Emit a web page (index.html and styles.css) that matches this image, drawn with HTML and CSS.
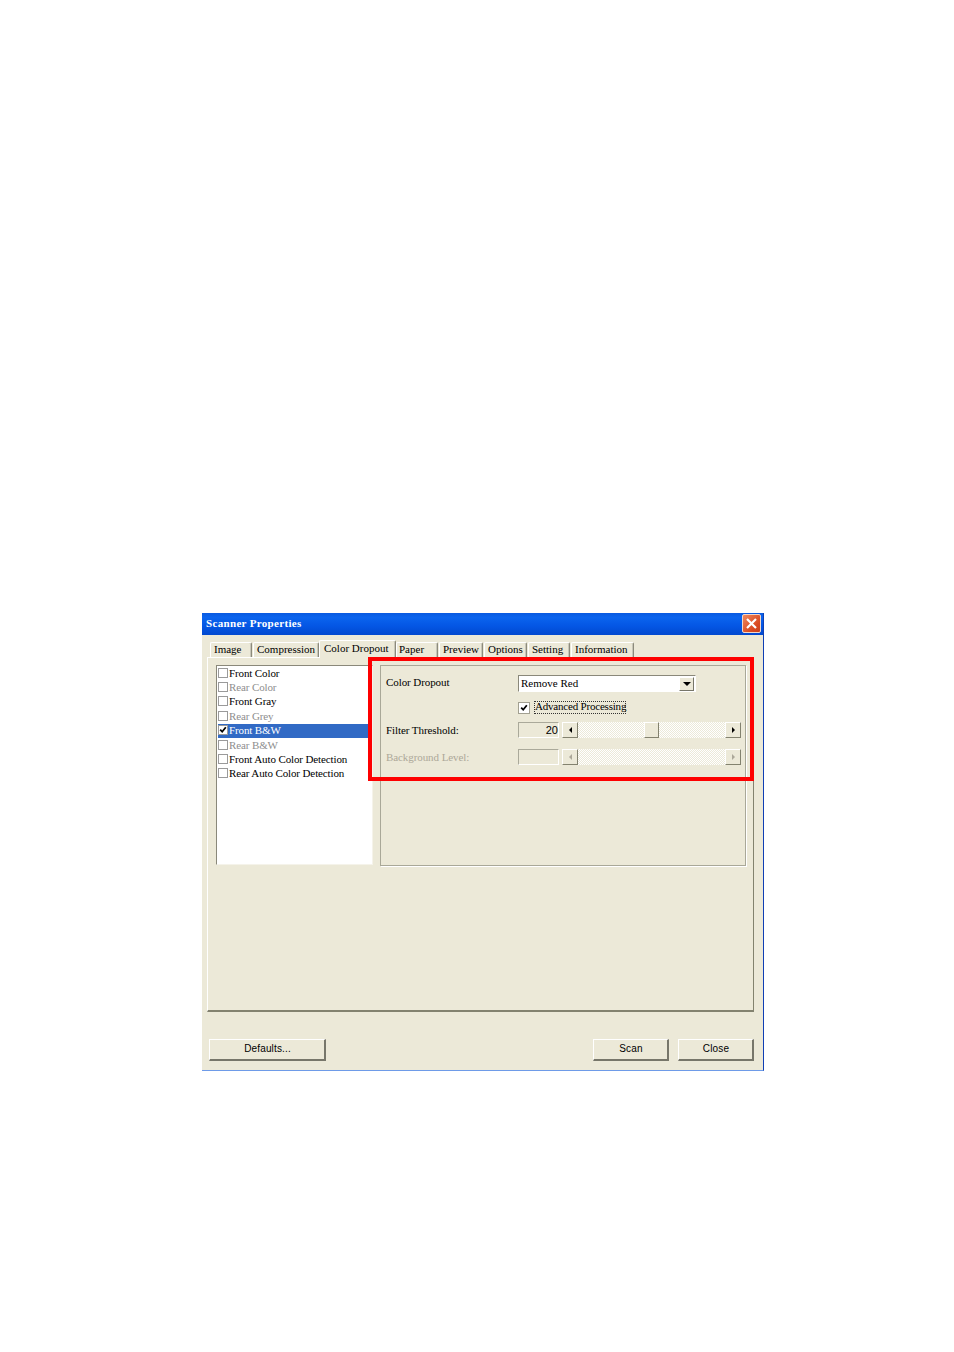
FILE: index.html
```html
<!DOCTYPE html>
<html lang="en">
<head>
<meta charset="utf-8">
<title>Scanner Properties</title>
<link rel="stylesheet" href="styles.css">
</head>
<body>
<div class="dialog">
  <header class="titlebar">
    <span class="title">Scanner Properties</span>
    <span class="close"><svg viewBox="0 0 19 19" width="19" height="19"><path d="M5 5 14 14M14 5 5 14" stroke="#fff" stroke-width="2.2" fill="none"/></svg></span>
  </header>
  <nav class="tabs">
    <span class="tab">Image</span>
    <span class="tab">Compression</span>
    <span class="tab active">Color Dropout</span>
    <span class="tab">Paper</span>
    <span class="tab">Preview</span>
    <span class="tab">Options</span>
    <span class="tab">Setting</span>
    <span class="tab">Information</span>
  </nav>
  <main class="panel">
    <ul class="list">
      <li class="item"><i class="box"></i>Front Color</li>
      <li class="item off"><i class="box"></i>Rear Color</li>
      <li class="item"><i class="box"></i>Front Gray</li>
      <li class="item off"><i class="box"></i>Rear Grey</li>
      <li class="item selected"><i class="box"><svg viewBox="0 0 10 10" width="8" height="8"><path d="M1.5 4.5 4 7.2 8.5 1.5" stroke="#000" stroke-width="2.2" fill="none"/></svg></i>Front B&amp;W</li>
      <li class="item off"><i class="box"></i>Rear B&amp;W</li>
      <li class="item"><i class="box"></i>Front Auto Color Detection</li>
      <li class="item"><i class="box"></i>Rear Auto Color Detection</li>
    </ul>
    <section class="group">
      <div class="row row-combo">
        <label class="label">Color Dropout</label>
        <div class="combo"><span class="combo-text">Remove Red</span><span class="combo-btn"><b class="tri down"></b></span></div>
      </div>
      <div class="row row-check">
        <span></span>
        <div class="check"><i class="box small"><svg viewBox="0 0 10 10" width="8" height="8"><path d="M1.5 4.5 4 7.2 8.5 1.5" stroke="#000" stroke-width="2.2" fill="none"/></svg></i><span class="focus">Advanced Processing</span></div>
      </div>
      <div class="row row-slider">
        <label class="label">Filter Threshold:</label>
        <div class="slider">
          <span class="value">20</span>
          <div class="scroll">
            <span class="sbtn"><b class="tri left"></b></span>
            <span class="track"><span class="thumb"></span></span>
            <span class="sbtn"><b class="tri right"></b></span>
          </div>
        </div>
      </div>
      <div class="row row-slider disabled">
        <label class="label">Background Level:</label>
        <div class="slider">
          <span class="value"></span>
          <div class="scroll">
            <span class="sbtn"><b class="tri left"></b></span>
            <span class="track"></span>
            <span class="sbtn"><b class="tri right"></b></span>
          </div>
        </div>
      </div>
    </section>
  </main>
  <footer class="footer">
    <button class="btn wide">Defaults...</button>
    <span class="spacer"></span>
    <button class="btn">Scan</button>
    <button class="btn">Close</button>
  </footer>
  <div class="redbox"></div>
</div>
</body>
</html>
```
FILE: styles.css
```css
* { box-sizing: border-box; }
html, body { margin: 0; background: #fff; }
body { padding: 613px 0 0 202px; height: 1352px; overflow: hidden; font-family: "Liberation Serif", serif; font-size: 11px; color: #000; }
.dialog { position: relative; width: 562px; height: 458px; background: #ece9d8; border-right: 1px solid #0f3fb4; border-bottom: 1px solid #6e9be8; display: flex; flex-direction: column; }
.titlebar { height: 22px; flex: none; display: flex; align-items: flex-start; justify-content: space-between; padding: 1px 2px 0 4px; background: linear-gradient(#0a5ae0 0%, #0b64ee 20%, #0456e4 60%, #0249cf 100%); }
.title { color: #fff; font-weight: bold; font-size: 11px; line-height: 18px; letter-spacing: .33px; }
.close { width: 19px; height: 19px; display: block; border: 1px solid #f4d8c8; border-radius: 2px; background: linear-gradient(135deg, #ee8a60, #d9481f 70%, #c8401c); }
.close svg { display: block; margin: -1px; }
.tabs { display: grid; grid-template-columns: 42px 66px 75px 42px 44px 43px 42px 63px; column-gap: 1px; height: 22px; margin: 0 0 0 8px; width: max-content; align-items: end; position: relative; z-index: 1; }
.tab { height: 15px; padding-left: 3px; line-height: 12px; font-size: 11px; white-space: nowrap; border: 1px solid #fff; border-bottom: 0; border-right: 1px solid #8c8a7c; box-shadow: inset -1px 0 #c8c6b8; border-radius: 2px 2px 0 0; }
.tab.active { height: 18px; margin: 0 -1px -1px; padding: 0 0 0 4px; line-height: 14px; background: #ece9d8; position: relative; }
.tab.active + .tab { padding-left: 2px; }
.panel { height: 355px; margin-left: 5px; width: 547px; flex: none; border: 1px solid #fff; border-bottom: 2px solid #83826f; border-right: 1px solid #83826f; padding: 7px 7px 0 8px; display: flex; gap: 7px; align-items: flex-start; }
.list { list-style: none; margin: 0; padding: 0 0 0 1px; width: 158px; height: 200px; background: #fff; border: 1px solid; border-color: #8a887a #f5f3ea #f5f3ea #8a887a; }
.item { display: flex; align-items: center; height: 14.4px; padding-bottom: 1px; line-height: 12px; font-size: 11px; white-space: nowrap; letter-spacing: -.12px; }
.item.off { color: #8e8e8e; }
.item.selected { background: #316ac5; color: #fff; }
.box { flex: none; display: flex; align-items: center; justify-content: center; width: 10px; height: 10px; margin-right: 1px; background: #fff; border: 1px solid #9a9a9a; }
.group { flex: none; width: 366px; height: 201px; padding: 9px 5px 0 5px; border: 1px solid #a9a898; box-shadow: 1px 1px 0 #fff; }
.row { display: grid; grid-template-columns: 132px 1fr; align-items: center; }
.label { font-size: 11px; letter-spacing: -.08px; }
.row-combo { height: 17px; }
.row-combo .label { padding-bottom: 3px; }
.disabled .label { padding-bottom: 1px; }
.row-check { height: 13px; margin-top: 9px; }
.row-slider { height: 16px; margin-top: 8px; }
.row-slider + .row-slider { margin-top: 11px; }
.combo { width: 178px; height: 17px; display: flex; align-items: center; justify-content: space-between; background: #fff; border: 1px solid; border-color: #8a887a #fff #fff #8a887a; padding: 0 1px 0 2px; }
.combo-text { font-size: 11px; padding-bottom: 2px; }
.combo-btn { width: 15px; height: 14px; display: flex; align-items: center; justify-content: center; background: #ece9d8; border: 1px solid; border-color: #fff #77766a #77766a #fff; }
.tri { display: block; width: 0; height: 0; border-style: solid; border-color: transparent; }
.tri.down { border-width: 4px 4px 0; border-top-color: #000; }
.tri.left { border-width: 3.5px 3.5px 3.5px 0; border-right-color: #000; }
.tri.right { border-width: 3.5px 0 3.5px 3.5px; border-left-color: #000; }
.check { display: flex; align-items: center; gap: 4px; }
.box.small { width: 12px; height: 12px; margin-right: 0; border-color: #a2a091; }
.focus { height: 13px; line-height: 10px; font-size: 11px; padding: 0 0 0 1px; outline: 1px dotted #333; outline-offset: -1px; width: 92px; white-space: nowrap; letter-spacing: -.2px; }
.slider { display: flex; gap: 3px; width: 223px; }
.value { width: 41px; height: 16px; line-height: 14px; text-align: right; padding-right: 0; font-family: "Liberation Sans", sans-serif; font-size: 11px; border: 1px solid; border-color: #aaa99a #fff #fff #aaa99a; }
.scroll { display: flex; width: 179px; height: 16px; }
.sbtn { flex: none; width: 16px; height: 16px; display: flex; align-items: center; justify-content: center; background: #ece9d8; border: 1px solid; border-color: #fff #83826f #83826f #fff; }
.track { flex: 1; background: #ece9d8 repeating-conic-gradient(#fff 0 25%, #ece9d8 0 50%) 0 0 / 2px 2px; padding-left: 66px; }
.thumb { display: block; width: 15px; height: 16px; background: #ece9d8; border: 1px solid; border-color: #fff #83826f #83826f #fff; }
.disabled .label { color: #aca899; }
.disabled .tri.left { border-right-color: #aca899; }
.disabled .tri.right { border-left-color: #aca899; }
.footer { display: flex; gap: 9px; margin-top: 27px; padding: 0 9px 0 7px; }
.spacer { flex: 1; }
.btn { width: 76px; height: 22px; padding: 0 0 2px 1px; background: #ece9d8; border: 1px solid; border-color: #fff #77766a #77766a #fff; border-right-width: 2px; border-bottom-width: 2px; font-family: "Liberation Sans", sans-serif; font-size: 10px; letter-spacing: .15px; color: #000; }
.btn.wide { width: 117px; }
.redbox { position: absolute; left: 166px; top: 44px; width: 386px; height: 124px; border: 4px solid #fe0000; pointer-events: none; z-index: 2; }
```
